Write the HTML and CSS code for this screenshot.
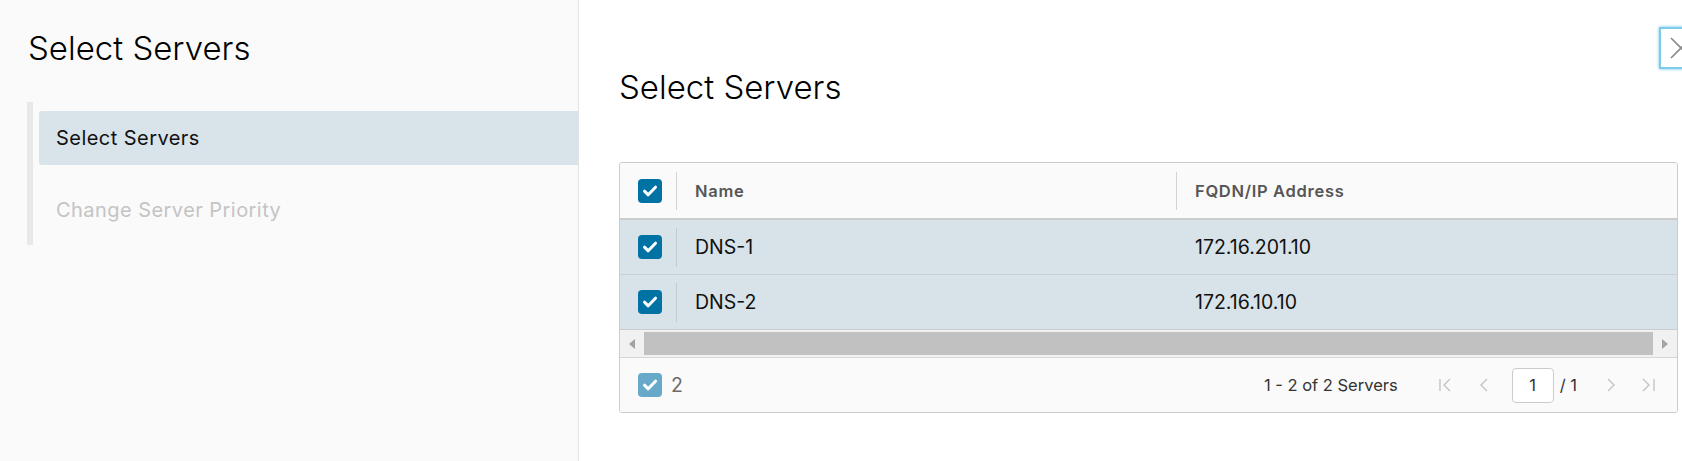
FILE: index.html
```html
<!DOCTYPE html>
<html lang="en">
<head>
<meta charset="utf-8">
<title>Select Servers</title>
<link rel="stylesheet" href="styles.css">
</head>
<body>
<div class="page">
  <aside class="side">
    <h1 class="side-title">Select Servers</h1>
    <nav class="steps">
      <div class="step active">Select Servers</div>
      <div class="step disabled">Change Server Priority</div>
    </nav>
  </aside>
  <main class="content">
    <button class="close" aria-label="Close">
      <svg width="22" height="22" viewBox="0 0 22 22"><path d="M1 1 L21 21 M21 1 L1 21" stroke="#8a8a8a" stroke-width="1.6" fill="none"/></svg>
    </button>
    <h2 class="title">Select Servers</h2>
    <div class="grid">
      <div class="row head">
        <div class="c-check"><svg class="cb" width="24" height="24" viewBox="0 0 24 24"><rect width="24" height="24" rx="4" fill="#0072a3"/><path d="M6.5 12.2 L10.2 15.8 L17.5 8.2" stroke="#fff" stroke-width="3" fill="none" stroke-linecap="round" stroke-linejoin="round"/></svg></div>
        <span class="sep"></span>
        <div class="c-name">Name</div>
        <span class="sep"></span>
        <div class="c-addr">FQDN/IP Address</div>
      </div>
      <div class="row body">
        <div class="c-check"><svg class="cb" width="24" height="24" viewBox="0 0 24 24"><rect width="24" height="24" rx="4" fill="#0072a3"/><path d="M6.5 12.2 L10.2 15.8 L17.5 8.2" stroke="#fff" stroke-width="3" fill="none" stroke-linecap="round" stroke-linejoin="round"/></svg></div>
        <span class="sep"></span>
        <div class="c-name wide">DNS-1</div>
        <div class="c-addr">172.16.201.10</div>
      </div>
      <div class="row body">
        <div class="c-check"><svg class="cb" width="24" height="24" viewBox="0 0 24 24"><rect width="24" height="24" rx="4" fill="#0072a3"/><path d="M6.5 12.2 L10.2 15.8 L17.5 8.2" stroke="#fff" stroke-width="3" fill="none" stroke-linecap="round" stroke-linejoin="round"/></svg></div>
        <span class="sep"></span>
        <div class="c-name wide">DNS-2</div>
        <div class="c-addr">172.16.10.10</div>
      </div>
      <div class="hscroll">
        <span class="arrow"><svg width="6" height="10" viewBox="0 0 6 10"><path d="M6 0 L0 5 L6 10 Z" fill="#a3a3a3"/></svg></span>
        <span class="thumb"></span>
        <span class="arrow"><svg width="6" height="10" viewBox="0 0 6 10"><path d="M0 0 L6 5 L0 10 Z" fill="#a3a3a3"/></svg></span>
      </div>
      <div class="foot">
        <svg class="cb" width="24" height="24" viewBox="0 0 24 24"><rect width="24" height="24" rx="4" fill="#68a8c8"/><path d="M6.5 12.2 L10.2 15.8 L17.5 8.2" stroke="#fff" stroke-width="3" fill="none" stroke-linecap="round" stroke-linejoin="round"/></svg>
        <span class="count">2</span>
        <div class="pager">
          <span class="range">1 - 2 of 2 Servers</span>
          <svg class="pg first" width="12" height="14" viewBox="0 0 12 14"><path d="M1 1 V13 M11 1 L5 7 L11 13" stroke="#c4c4c4" stroke-width="1.4" fill="none"/></svg>
          <svg class="pg prev" width="10" height="14" viewBox="0 0 10 14"><path d="M8 1 L2 7 L8 13" stroke="#c4c4c4" stroke-width="1.4" fill="none"/></svg>
          <span class="page-input">1</span>
          <span class="total">/ 1</span>
          <svg class="pg next" width="10" height="14" viewBox="0 0 10 14"><path d="M2 1 L8 7 L2 13" stroke="#c4c4c4" stroke-width="1.4" fill="none"/></svg>
          <svg class="pg last" width="13" height="14" viewBox="0 0 13 14"><path d="M1 1 L7 7 L1 13 M12 1 V13" stroke="#c4c4c4" stroke-width="1.4" fill="none"/></svg>
        </div>
      </div>
    </div>
  </main>
</div>
</body>
</html>
```

FILE: styles.css
```css
html, body {
  margin: 0;
  padding: 0;
  overflow: hidden;
}
body {
  font-family: Inter, "Noto Sans", "Liberation Sans", sans-serif;
  color: #1b1b1b;
  background: #fff;
}
.page {
  display: flex;
  height: 461px;
}
.side {
  width: 578px;
  flex: none;
  background: #fafafa;
  border-right: 1px solid #e3e3e3;
}
.side-title {
  margin: 28px 0 0 28px;
  font-size: 33px;
  line-height: 40px;
  font-weight: 300;
  color: #000;
  letter-spacing: 0;
}
.steps {
  margin: 34px 0 0 27px;
  border-left: 6px solid #e8e8e8;
  padding: 9px 0 8px 6px;
}
.step {
  height: 54px;
  line-height: 54px;
  padding-left: 17px;
  font-size: 20px;
  font-weight: 400;
  letter-spacing: 0.45px;
}
.step.active {
  background: #d9e4ea;
  border-radius: 3px 0 0 3px;
  color: #111;
}
.step.disabled {
  margin-top: 18px;
  color: #c4c4c4;
}
.content {
  flex: 1;
  position: relative;
  padding: 67px 4px 0 40px;
}
.close {
  position: absolute;
  left: 1080px;
  top: 27px;
  width: 42px;
  height: 42px;
  padding: 0 0 0 9px;
  background: #fff;
  border: 2px solid #7ccbea;
  box-shadow: 0 0 3px #6cc3e8;
  display: flex;
  align-items: center;
}
.title {
  margin: 0;
  font-size: 33px;
  line-height: 40px;
  font-weight: 300;
  color: #000;
  letter-spacing: 0;
}
.grid {
  margin-top: 55px;
  border: 1px solid #ccc;
  border-radius: 3px;
  overflow: hidden;
  background: #fafafa;
}
.row {
  display: flex;
  align-items: center;
}
.row.head {
  height: 55px;
  border-bottom: 2px solid #ccc;
  background: #fafafa;
  font-size: 16.5px;
  font-weight: 600;
  color: #565656;
  letter-spacing: 0.7px;
}
.row.body {
  height: 54px;
  border-bottom: 1px solid #c8cfd4;
  background: #d8e3e9;
  font-size: 19.5px;
  color: #111;
}
.c-check {
  width: 56px;
  padding-left: 18px;
  box-sizing: border-box;
  display: flex;
  align-items: center;
}
.cb {
  display: block;
  flex: none;
}
.sep {
  width: 1px;
  height: 38px;
  background: #d2d2d2;
  flex: none;
}
.row.body .sep {
  height: 39px;
  background: #c3c9cd;
}
.c-name {
  width: 499px;
  padding-left: 18px;
  box-sizing: border-box;
}
.c-name.wide {
  width: 500px;
}
.c-addr {
  flex: 1;
  padding-left: 18px;
}
.hscroll {
  height: 27px;
  background: #f1f1f1;
  display: flex;
  align-items: flex-start;
  padding-top: 2px;
  box-sizing: border-box;
}
.arrow {
  width: 24px;
  height: 23px;
  display: flex;
  align-items: center;
  justify-content: center;
  flex: none;
}
.thumb {
  flex: 1;
  height: 23px;
  background: #c1c1c1;
}
.foot {
  height: 54px;
  border-top: 1px solid #d6d6d6;
  display: flex;
  align-items: center;
  padding: 0 22px 0 18px;
  background: #fafafa;
}
.count {
  margin-left: 9px;
  font-size: 19.5px;
  color: #6b6b6b;
}
.pager {
  margin-left: auto;
  display: flex;
  align-items: center;
  font-size: 16.5px;
  color: #333;
}
.pg {
  display: block;
  flex: none;
}
.first { margin-left: 41px; }
.prev { margin-left: 28px; }
.page-input {
  margin-left: 23px;
  width: 42px;
  height: 35px;
  box-sizing: border-box;
  border: 1px solid #ccc;
  border-radius: 4px;
  background: #fff;
  display: flex;
  align-items: center;
  justify-content: center;
}
.total { margin-left: 6px; }
.next { margin-left: 29px; }
.last { margin-left: 26px; }
```
